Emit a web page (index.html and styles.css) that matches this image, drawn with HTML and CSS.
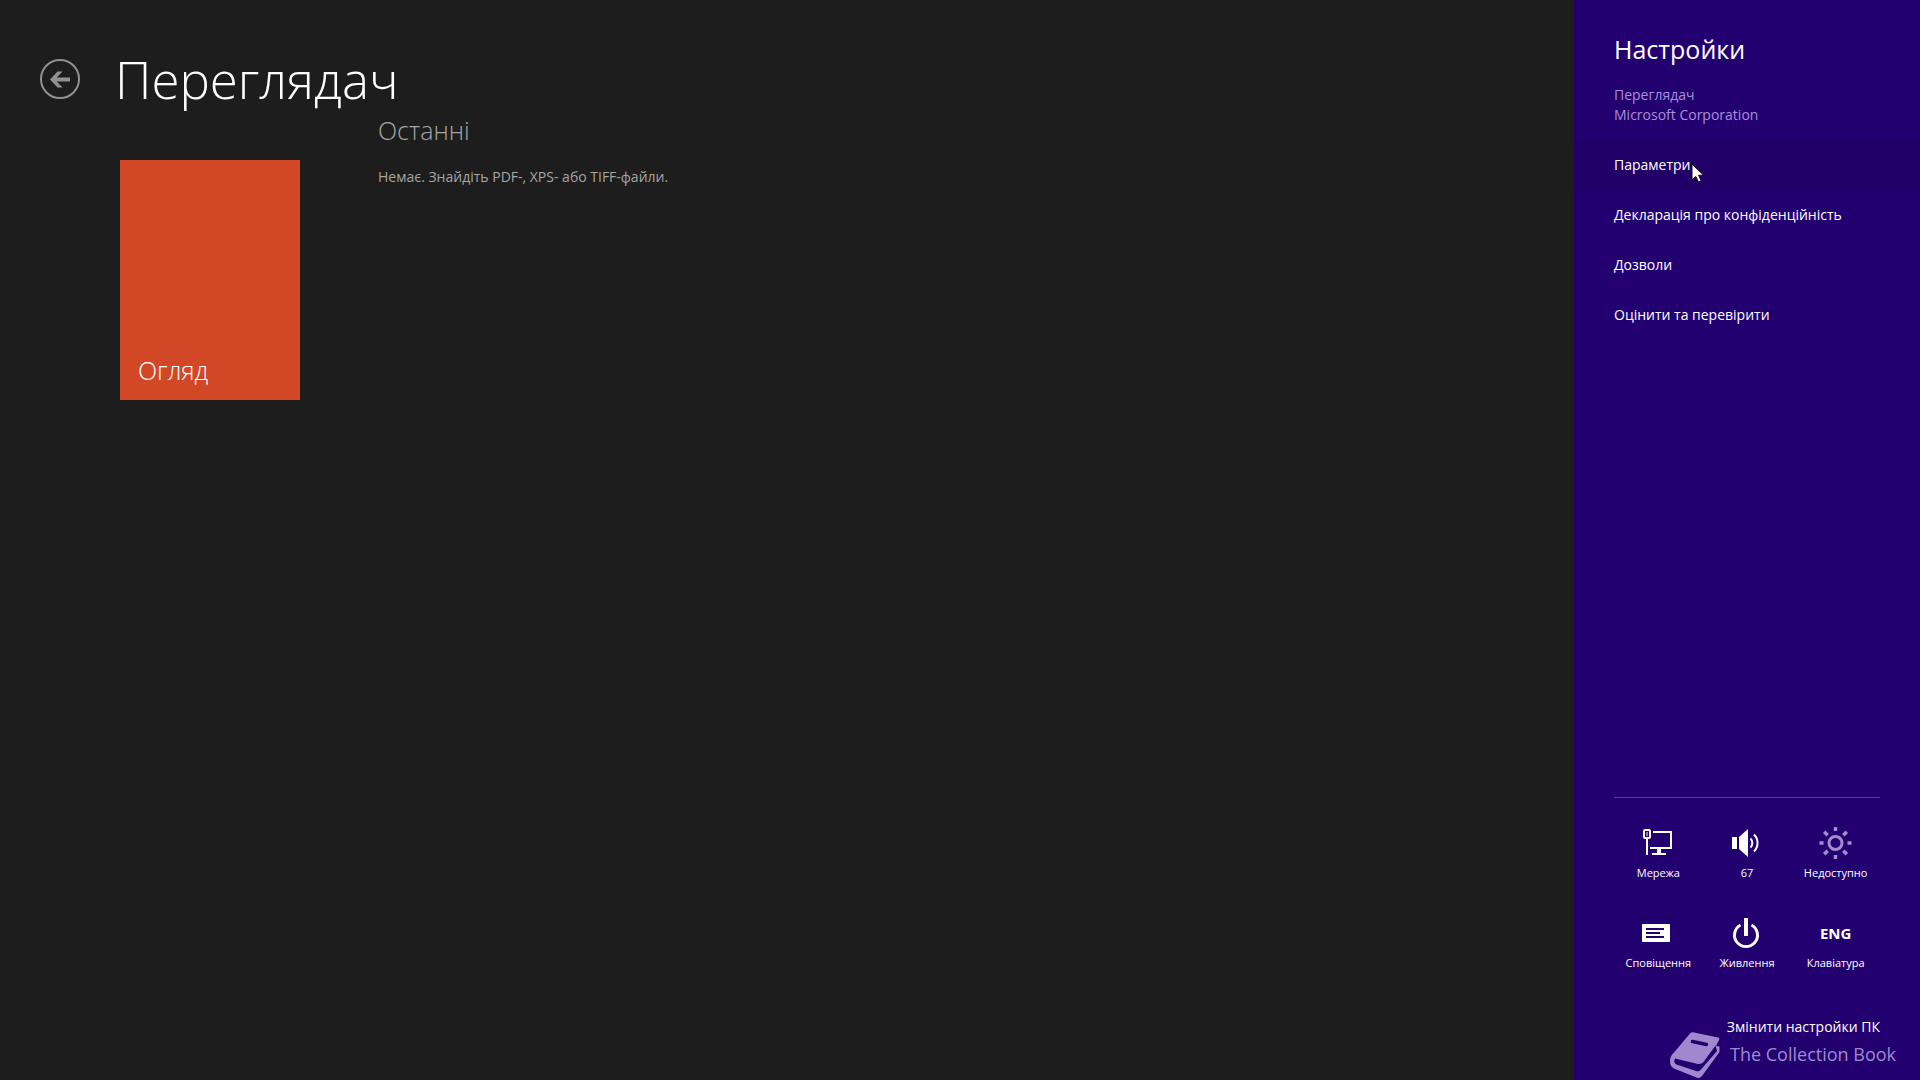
FILE: index.html
```html
<!DOCTYPE html>
<html lang="uk">
<head>
<meta charset="utf-8">
<title>Переглядач</title>
<link rel="stylesheet" href="styles.css">
</head>
<body>
<main class="reader">
  <header class="reader-header">
    <button class="back" type="button" aria-label="Назад">
      <svg viewBox="0 0 40 40" width="40" height="40"><circle cx="20" cy="20" r="19" fill="none" stroke="currentColor" stroke-width="2"/><path d="M10 20.500 17.500 12.500h5L16.800 18.500H30v4H16.800L22.500 28.500h-5z" fill="currentColor"/></svg>
    </button>
    <h1 class="reader-title">Переглядач</h1>
  </header>
  <div class="reader-body">
    <button class="browse" type="button">Огляд</button>
    <section class="recent">
      <h2 class="recent-title">Останні</h2>
      <p class="recent-empty">Немає. Знайдіть PDF-, XPS- або TIFF-файли.</p>
    </section>
  </div>
</main>

<aside class="charm">
  <h2 class="charm-title">Настройки</h2>
  <p class="charm-app">Переглядач<br>Microsoft Corporation</p>
  <nav class="commands">
    <a class="command command-hover" href="#options"><span class="command-label">Параметри<svg class="cursor" viewBox="0 0 14 20" width="14" height="20"><path d="M1 1v16l3.800-3.500L7.500 19l2.600-1.200L7.600 12.300H12.500z" fill="#fff" stroke="#111" stroke-width="1"/></svg></span></a>
    <a class="command" href="#privacy">Декларація про конфіденційність</a>
    <a class="command" href="#permissions">Дозволи</a>
    <a class="command" href="#rate">Оцінити та перевірити</a>
  </nav>
  <div class="system">
    <button class="tile" type="button">
      <svg viewBox="0 0 32 32" width="32" height="32" fill="none" stroke="currentColor"><rect x="2" y="3" width="6" height="8" rx="1" stroke-width="2"/><path d="M5 5v4" stroke-width="1"/><path d="M5 11v17M11 5H29V21H8" stroke-width="2"/><path d="M17 21v5" stroke-width="4"/><path d="M10 27h14" stroke-width="2"/></svg>
      <span>Мережа</span>
    </button>
    <button class="tile" type="button">
      <svg viewBox="0 0 32 32" width="32" height="32" fill="currentColor"><path d="M1 10h5v12H1zM8 10l9-8v28L8 22z"/><path d="M19.500 11.500a6.500 6.500 0 0 1 0 9M23 7.500a12 12 0 0 1 0 17" fill="none" stroke="currentColor" stroke-width="2"/></svg>
      <span>67</span>
    </button>
    <button class="tile" type="button">
      <svg class="dim" viewBox="0 0 32 32" width="32" height="32" fill="none" stroke="currentColor" stroke-width="3"><circle cx="15.500" cy="16" r="6.500"/><path d="M15.500 0v4M15.500 28v4M-.5 16h4M27.500 16h4M4.200 4.700l3.500 3.500M23.300 23.800l3.500 3.500M26.800 4.700l-3.500 3.500M7.700 23.800l-3.500 3.500" stroke-width="3.500"/></svg>
      <span>Недоступно</span>
    </button>
    <button class="tile" type="button">
      <svg viewBox="0 0 32 32" width="32" height="32"><rect x="0" y="7" width="28" height="18" rx="1" fill="currentColor"/><path d="M4 12h18M4 16h14M4 20h18" stroke="#230070" stroke-width="2"/></svg>
      <span>Сповіщення</span>
    </button>
    <button class="tile" type="button">
      <svg viewBox="0 0 32 32" width="32" height="32" fill="none" stroke="currentColor" stroke-width="3"><path d="M9.500 8a11.500 11.500 0 1 0 11 0"/><path d="M15 1v18" stroke-width="4"/></svg>
      <span>Живлення</span>
    </button>
    <button class="tile" type="button">
      <span class="lang">ENG</span>
      <span>Клавіатура</span>
    </button>
  </div>
  <a class="pc-settings" href="#pc">Змінити настройки ПК</a>
</aside>

<div class="watermark">
  <svg viewBox="0 0 50 50" width="50" height="50">
    <path d="M20 3.500Q21.500 2 23 2.300L48 7.500Q50 8 49 10L46 16 49.500 16.500V22L32 46Q30 48.500 27 47.700L4 38.500Q0 36.500 0 31 0 26 4 22.500z" fill="currentColor"/>
    <path d="M5 28.500 28 34Q31.500 34.500 33.500 32L45.500 15.500 47 21 30.500 40Q28.500 42 26 41L6.500 34.500Q3 32.500 5 28.500z" fill="#230070"/>
    <path d="M22.500 11.500 36.500 14.500" fill="none" stroke="#230070" stroke-width="3.500" stroke-linecap="round"/>
  </svg>
  <span>The Collection Book</span>
</div>
</body>
</html>
```
FILE: styles.css
```css
* { box-sizing: border-box; }

body {
  margin: 0;
  min-height: 100vh;
  display: flex;
  position: relative;
  overflow: hidden;
  background: #1d1d1d;
  color: #fff;
  font: 14px/20px "Open Sans", "Noto Sans", sans-serif;
}

h1, h2, p { margin: 0; font-weight: 400; }
a { color: inherit; text-decoration: none; }
svg { display: block; overflow: visible; }

button {
  padding: 0;
  border: 0;
  background: none;
  color: inherit;
  font: inherit;
}

.reader { flex: 1; min-width: 0; }

.reader-header {
  display: flex;
  align-items: center;
  gap: 35px;
  padding: 47px 40px 0;
}
.back { color: #919191; }
.reader-title {
  font-size: 51px;
  line-height: 64px;
  font-weight: 300;
}

.reader-body {
  display: flex;
  align-items: flex-start;
  gap: 78px;
  padding: 3px 40px 0 120px;
}
.browse {
  display: flex;
  align-items: flex-end;
  width: 180px;
  height: 240px;
  margin-top: 46px;
  padding: 0 18px 14px;
  background: #d24726;
  font-size: 25px;
  line-height: 32px;
  font-weight: 300;
}
.recent { color: #a5a5a5; }
.recent-title {
  margin-bottom: 21px;
  font-size: 25px;
  line-height: 32px;
  font-weight: 300;
}

.charm {
  display: flex;
  flex-direction: column;
  width: 346px;
  padding: 33px 40px 43px;
  background: #230070;
}
.charm-title {
  margin-bottom: 20px;
  font-size: 25px;
  line-height: 32px;
}
.charm-app {
  margin-bottom: 15px;
  color: #a98fdb;
}
.commands {
  display: flex;
  flex-direction: column;
  margin: 0 -40px;
}
.command { padding: 15px 40px; }
.command-hover { background: #210067; }
.command-label { position: relative; }
.cursor {
  position: absolute;
  left: 100%;
  top: 8px;
}

.system {
  display: grid;
  grid-template-columns: repeat(3, 1fr);
  row-gap: 36px;
  margin-top: auto;
  margin-bottom: 46px;
  padding-top: 29px;
  border-top: 1px solid #5c3aa0;
}
.tile {
  display: flex;
  flex-direction: column;
  align-items: center;
  gap: 6px;
  font-size: 11px;
  line-height: 16px;
}
.dim { color: #a48bd0; }
.lang {
  font-size: 15px;
  line-height: 32px;
  font-weight: 700;
}
.pc-settings { align-self: flex-end; }

.watermark {
  position: absolute;
  right: 24px;
  bottom: 0;
  display: flex;
  gap: 10px;
  color: #a088cf;
  font-size: 18px;
  line-height: 48px;
}
```
